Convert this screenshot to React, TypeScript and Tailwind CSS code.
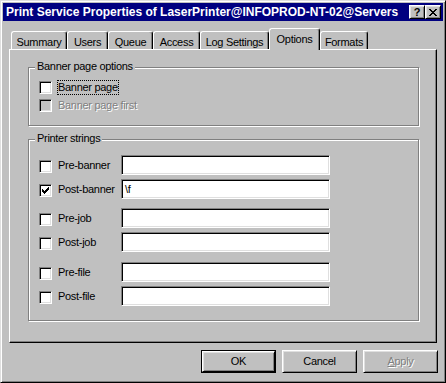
import React from 'react'

const sunken =
  'border border-t-[#808080] border-l-[#808080] border-b-white border-r-white shadow-[inset_1px_1px_0_#000,inset_-1px_-1px_0_#dfdfdf]'
const raised =
  'border border-t-white border-l-white border-b-black border-r-black shadow-[inset_1px_1px_0_#dfdfdf,inset_-1px_-1px_0_#808080]'

function Tick() {
  return (
    <svg width="7" height="7" viewBox="0 0 7 7" shapeRendering="crispEdges">
      <path
        fill="#000"
        d="M6 0h1v1h-1zM5 1h2v1h-2zM0 2h1v1h-1zM4 2h3v1h-3zM0 3h2v1h-2zM3 3h3v1h-3zM0 4h5v1h-5zM1 5h3v1h-3zM2 6h1v1h-1z"
      />
    </svg>
  )
}

function Check({ checked, disabled }: { checked?: boolean; disabled?: boolean }) {
  return (
    <div
      className={`w-[13px] h-[13px] shrink-0 flex items-center justify-center ${sunken} ${
        disabled ? 'bg-[#c0c0c0]' : 'bg-white'
      }`}
    >
      {checked && <Tick />}
    </div>
  )
}

function Field({ value }: { value?: string }) {
  return (
    <div className={`w-[209px] h-[20px] bg-white ${sunken} pl-[3px] flex items-center`}>
      {value}
    </div>
  )
}

function StringRow({ label, checked, value, className }: { label: string; checked?: boolean; value?: string; className?: string }) {
  return (
    <div className={`flex items-center h-[20px] ${className ?? ''}`}>
      <div className="w-[13px] mt-[2px]">
        <Check checked={checked} />
      </div>
      <span className="ml-[6px] w-[63px]">{label}</span>
      <Field value={value} />
    </div>
  )
}

function Group({ title, className, children }: { title: string; className?: string; children: React.ReactNode }) {
  return (
    <div
      className={`relative w-[391px] border border-[#808080] shadow-[inset_1px_1px_0_#fff,1px_1px_0_#fff] ${className ?? ''}`}
    >
      <span className="absolute -top-[8px] left-[6px] px-[2px] bg-[#c0c0c0] leading-[13px]">{title}</span>
      {children}
    </div>
  )
}

const tabs = [
  { label: 'Summary', w: 'w-[56px]' },
  { label: 'Users', w: 'w-[41px]' },
  { label: 'Queue', w: 'w-[45px]' },
  { label: 'Access', w: 'w-[47px]' },
  { label: 'Log Settings', w: 'w-[69px]' },
  { label: 'Options', w: 'w-[51px]', active: true },
  { label: 'Formats', w: 'w-[48px]' },
]

function Button({ children, isDefault, disabled }: { children: React.ReactNode; isDefault?: boolean; disabled?: boolean }) {
  const inner = (
    <div className={`w-full h-full flex items-center justify-center bg-[#c0c0c0] ${raised}`}>
      <span className={disabled ? 'text-[#808080] [text-shadow:1px_1px_0_#fff]' : ''}>{children}</span>
    </div>
  )
  return (
    <div className={`w-[75px] h-[23px] ${isDefault ? 'border border-black' : ''}`}>{inner}</div>
  )
}

export default function App() {
  return (
    <div className="w-[446px] h-[383px] bg-[#c0c0c0] font-['Liberation_Sans',Arial,sans-serif] text-[11px] tracking-[-0.3px] text-black border border-t-[#dfdfdf] border-l-[#dfdfdf] border-r-black border-b-black shadow-[inset_1px_1px_0_#fff,inset_-1px_-1px_0_#808080] p-[2px] flex flex-col">
      {/* title bar */}
      <div className="h-[18px] bg-[#000080] flex items-center justify-between pl-[3px] pr-[2px]">
        <span className="text-white font-bold text-[12px] tracking-normal">
          Print Service Properties of LaserPrinter@INFOPROD-NT-02@Servers
        </span>
        <div className="flex">
          <div className={`w-[16px] h-[14px] bg-[#c0c0c0] ${raised} flex items-center justify-center font-bold text-[11px] leading-none tracking-normal`}>
            ?
          </div>
          <div className={`w-[16px] h-[14px] bg-[#c0c0c0] ${raised} flex items-center justify-center`}>
            <svg width="8" height="7" viewBox="0 0 8 7" shapeRendering="crispEdges">
              <path
                fill="#000"
                d="M0 0h2v1h-2zM6 0h2v1h-2zM1 1h2v1h-2zM5 1h2v1h-2zM2 2h4v1h-4zM3 3h2v1h-2zM2 4h4v1h-4zM1 5h2v1h-2zM5 5h2v1h-2zM0 6h2v1h-2zM6 6h2v1h-2z"
              />
            </svg>
          </div>
        </div>
      </div>

      <div className="pl-[6px] pr-[5px] pt-[7px] flex flex-col">
        {/* tabs */}
        <div className="flex items-end h-[21px] pl-[2px]">
          {tabs.map((t) =>
            t.active ? (
              <div
                key={t.label}
                className={`${t.w} h-[22px] -mb-[1px] relative z-10 bg-[#c0c0c0] border-t border-l border-t-white border-l-white border-r border-r-black shadow-[inset_-1px_0_0_#808080] rounded-t-[3px] flex justify-center pt-[2px]`}
              >
                {t.label}
              </div>
            ) : (
              <div
                key={t.label}
                className={`${t.w} h-[18px] bg-[#c0c0c0] border-t border-l border-t-white border-l-white border-r border-r-black shadow-[inset_-1px_0_0_#808080] rounded-t-[3px] flex justify-center pt-[2px]`}
              >
                {t.label}
              </div>
            )
          )}
        </div>

        {/* panel */}
        <div className="w-[428px] h-[294px] border border-t-white border-l-white border-r-black border-b-black shadow-[inset_-1px_-1px_0_#808080] pl-[18px] pt-[17px] flex flex-col">
          <Group title="Banner page options" className="h-[59px]">
            <div className="flex flex-col pl-[10px] pt-[13px] gap-[5px]">
              <div className="flex items-center h-[13px]">
                <Check />
                <span className="ml-[5px] border border-dotted border-black px-[0px] leading-[13px]">Banner page</span>
              </div>
              <div className="flex items-center h-[13px]">
                <Check disabled />
                <span className="ml-[6px] text-[#808080] [text-shadow:1px_1px_0_#fff]">Banner page first</span>
              </div>
            </div>
          </Group>

          <Group title="Printer strings" className="h-[182px] mt-[13px]">
            <div className="flex flex-col pl-[10px] pt-[15px]">
              <StringRow label="Pre-banner" />
              <StringRow label="Post-banner" checked value="\f" className="mt-[4px]" />
              <StringRow label="Pre-job" className="mt-[9px]" />
              <StringRow label="Post-job" className="mt-[4px]" />
              <StringRow label="Pre-file" className="mt-[10px]" />
              <StringRow label="Post-file" className="mt-[4px]" />
            </div>
          </Group>
        </div>

        {/* buttons */}
        <div className="flex justify-end gap-[6px] mt-[7px] pr-[0px]">
          <Button isDefault>OK</Button>
          <Button>Cancel</Button>
          <Button disabled>
            <span className="underline">A</span>pply
          </Button>
        </div>
      </div>
    </div>
  )
}
